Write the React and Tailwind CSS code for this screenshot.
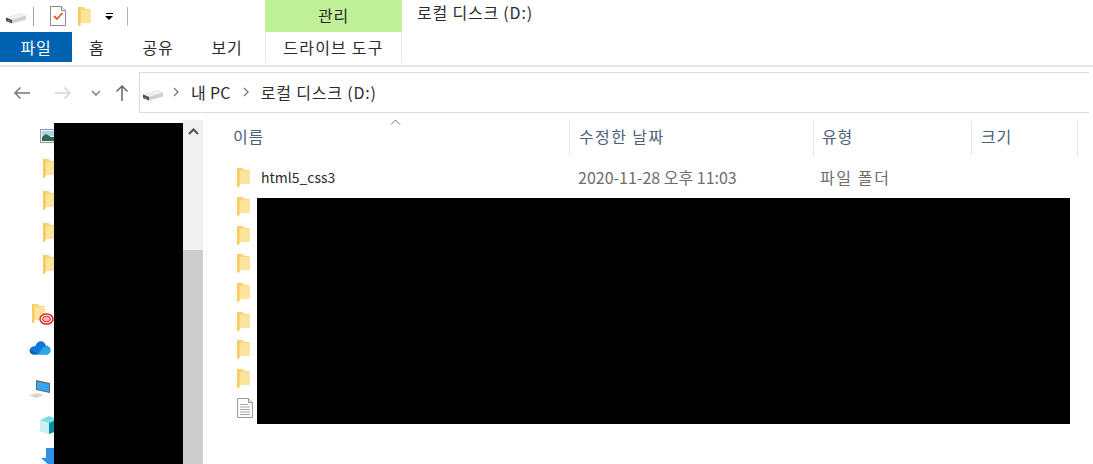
import React from "react";

const FONT = "font-['Noto_Sans_CJK_KR','Noto_Sans',sans-serif]";

const Folder = ({ className = "" }) => (
  <svg width="13" height="19" viewBox="1 0 13 19" className={className}>
    <path d="M1 0h6l1.500 2H13.500v14H3.500v2L1 19z" fill="#fbd577" />
    <path d="M3.500 3H13.500v13H3.500z" fill="#fee39a" />
    <path d="M1 0h2.500v18L1 19z" fill="#f5cb63" />
  </svg>
);

const Drive = ({ className = "" }) => (
  <svg width="20" height="12" viewBox="0 0 20 12" className={className}>
    <path d="M0 5.500 14 1l6 2.500v4L6 11.500 0 9z" fill="#cfcfcf" />
    <path d="M0 5.500 6 8l14-4.500L14 1z" fill="#f0f0f0" />
    <path d="M0 5.500 6 8v3.500L0 9z" fill="#4d4d4d" />
    <path d="M2 8l2 .8v1L2 9z" fill="#4caf50" />
  </svg>
);

const CheckDoc = () => (
  <svg width="16" height="20" viewBox="0 0 16 20">
    <path d="M.5.500h11l4 4v15H.5z" fill="#fff" stroke="#8a8a8a" />
    <path d="M11.500.500v4h4" fill="#eee" stroke="#8a8a8a" />
    <path d="M4 10l3 3 5.500-6" fill="none" stroke="#e2562a" strokeWidth="1.800" />
  </svg>
);

const TextDoc = () => (
  <svg width="16" height="20" viewBox="0 0 16 20">
    <path d="M.5.500h11l4 4v15H.5z" fill="#fbfbfb" stroke="#9a9a9a" />
    <path d="M11.500.500v4h4" fill="#e6e6e6" stroke="#9a9a9a" />
    <path d="M3 6.500h8M3 9h10M3 11.500h10M3 14h10M3 16.500h10" stroke="#a9a9a9" />
  </svg>
);

const Picture = () => (
  <svg width="16" height="14" viewBox="0 0 16 14">
    <rect x=".5" y=".5" width="15" height="13" fill="#f5f5f5" stroke="#9a9a9a" />
    <rect x="2" y="2" width="12" height="5" fill="#a8d4e8" />
    <path d="M2 8l4-3 5 3h3v4H2z" fill="#2f6b4f" />
  </svg>
);

const AdobeFolder = () => (
  <div className="relative w-[18px] h-[20px]">
    <Folder />
    <svg width="15" height="12" viewBox="0 0 15 12" className="absolute right-[-4px] bottom-[-1px]">
      <ellipse cx="7.500" cy="6" rx="6.500" ry="5" fill="#fff" stroke="#e0201b" strokeWidth="1.500" />
      <ellipse cx="7.500" cy="6" rx="4" ry="2.800" fill="#f7b5b0" stroke="#e0201b" />
    </svg>
  </div>
);

const OneDrive = () => (
  <svg width="22" height="15" viewBox="0 0 22 15">
    <path d="M5 14.500C1 14.500 0 11 1 9c1-2 3-3 5-2.500C7.500 2 11 .500 13.500 1.500 15.500 2.500 16.500 4 17 6c3 0 5 2.500 4.500 5-.4 2.200-2 3.500-4 3.500z" fill="#0f78d4" />
    <path d="M5 14.500C2 14.500 0 12 1 9.500l8 5z" fill="#0a5eb0" />
    <path d="M13.500 8c1.500-1.500 5-2 6.500 0s1.500 5-1 6.500H9z" fill="#29a8ea" />
  </svg>
);

const Computer = () => (
  <svg width="22" height="19" viewBox="0 0 22 19">
    <path d="M7 0l14 3v10L7 10z" fill="#666" />
    <path d="M8 1.500l12 2.500v7.800L8 9.300z" fill="#35a7f2" />
    <path d="M0 15.500l8-2.500 7 2-8 3z" fill="#d4d4d4" />
  </svg>
);

const Cube = () => (
  <svg width="14" height="20" viewBox="0 0 14 20">
    <path d="M0 5l9-4 5 2v14l-5 2-9-3z" fill="#7fdfe4" />
    <path d="M0 5l9 3v11L0 16z" fill="#c8f1f2" />
    <path d="M9 8l5-2v11l-5 2z" fill="#0b8aa6" />
  </svg>
);

const Download = () => (
  <svg width="14" height="17" viewBox="0 0 14 17">
    <path d="M5 0h9v17H8L0 10h5z" fill="#2f8fe6" />
  </svg>
);

const sideRows = [
  { icon: <Picture />, pl: "pl-[40px]" },
  { icon: <Folder />, pl: "pl-[43px]" },
  { icon: <Folder />, pl: "pl-[43px]" },
  { icon: <Folder />, pl: "pl-[43px]" },
  { icon: <Folder />, pl: "pl-[43px]" },
];

const fileIcons = [1, 2, 3, 4, 5, 6, 7, 8];

const columns = [
  { label: "이름", w: "w-[341px]", pl: "pl-[4px]" },
  { label: "수정한 날짜", w: "w-[244px]", pl: "pl-[9px] tracking-[1.400px]" },
  { label: "유형", w: "w-[158px]", pl: "pl-[8px]" },
  { label: "크기", w: "w-[106px]", pl: "pl-[9px]" },
];

export default function App() {
  return (
    <div className={`${FONT} relative w-[1093px] h-[464px] overflow-hidden bg-white text-[16px] tracking-[0.8px] text-[#2b2b2b]`}>
      {/* title bar */}
      <div className="flex h-[32px]">
        <div className="flex items-center w-[265px] pl-[6px]">
          <Drive className="mt-[3px]" />
          <div className="w-px h-[19px] bg-[#a0a0a0] ml-[7px]" />
          <div className="ml-[16px]"><CheckDoc /></div>
          <Folder className="ml-[12px]" />
          <div className="ml-[14px] flex flex-col items-center gap-[2px]">
            <div className="w-[7px] h-px bg-black" />
            <div className="w-0 h-0 border-x-[4px] border-x-transparent border-t-[4px] border-t-black" />
          </div>
          <div className="w-px h-[19px] bg-[#b5b5b5] ml-[14px]" />
        </div>
        <div className="w-[137px] bg-[#c0f199] flex items-center justify-center pb-[3px]">관리</div>
        <div className="pl-[15px] pt-[2px] leading-[20px]">로컬 디스크 (D:)</div>
      </div>

      {/* ribbon tabs */}
      <div className="flex h-[30px]">
        <div className="w-[72px] bg-[#0063b1] text-white flex items-center justify-center">파일</div>
        <div className="w-[193px] flex items-center">
          <span className="ml-[17px]">홈</span>
          <span className="ml-[38px]">공유</span>
          <span className="ml-[38px]">보기</span>
        </div>
        <div className="w-[137px] flex items-center justify-center border-x border-[#e6e6e6] tracking-[1.200px]">드라이브 도구</div>
      </div>

      <div className="mt-[3px] h-[2px] bg-[#e6e6e6]" />

      {/* address row */}
      <div className="flex items-center h-[46px] pt-[5px]">
        <div className="flex items-center w-[139px] pl-[13px] text-[#6d6d6d]">
          <svg width="18" height="14" viewBox="0 0 18 14" fill="none" stroke="#777" strokeWidth="1.500">
            <path d="M17 7H2M7.500 1.500 2 7l5.500 5.500" />
          </svg>
          <svg width="18" height="14" viewBox="0 0 18 14" fill="none" stroke="#d4d4d4" strokeWidth="1.500" className="ml-[23px]">
            <path d="M1 7h15M10.500 1.500 16 7l-5.500 5.500" />
          </svg>
          <svg width="10" height="6" viewBox="0 0 10 6" fill="none" stroke="#777" strokeWidth="1.400" className="ml-[19px]">
            <path d="M1 1l4 4 4-4" />
          </svg>
          <svg width="14" height="17" viewBox="0 0 14 17" fill="none" stroke="#666" strokeWidth="1.500" className="ml-[14px]">
            <path d="M7 17V2M1.500 7.500 7 2l5.500 5.500" />
          </svg>
        </div>
        <div className="flex items-center w-[950px] h-[41px] border-y border-l border-[#dcdcdc] pl-[3px] pb-[2px]">
          <Drive className="mt-[6px]" />
          <svg width="6" height="10" viewBox="0 0 6 10" fill="none" stroke="#777" strokeWidth="1.300" className="ml-[10px]">
            <path d="M1 1l4 4-4 4" />
          </svg>
          <span className="ml-[12px] tracking-[0.3px]">내 PC</span>
          <svg width="6" height="10" viewBox="0 0 6 10" fill="none" stroke="#777" strokeWidth="1.300" className="ml-[12px]">
            <path d="M1 1l4 4-4 4" />
          </svg>
          <span className="ml-[12px]">로컬 디스크 (D:)</span>
        </div>
      </div>

      {/* body */}
      <div className="flex h-[351px]">
        <div className="relative w-[203px] shrink-0 pt-[7px]">
          <div className="w-[183px]">
            {sideRows.map((row, i) => (
              <div key={i} className={`${row.pl} h-[32px] flex items-center`}>{row.icon}</div>
            ))}
            <div className="h-[46px] flex items-end pl-[32px] pb-[2px]"><AdobeFolder /></div>
            <div className="h-[39px] flex items-center pl-[29px] pt-[4px]"><OneDrive /></div>
            <div className="h-[43px] flex items-center pl-[29px] pt-[6px]"><Computer /></div>
            <div className="h-[32px] flex items-center pl-[40px] pt-[2px]"><Cube /></div>
            <div className="h-[32px] flex items-center pl-[41px]"><Download /></div>
          </div>
          <div className="absolute left-[183px] top-[7px] bottom-0 w-[20px] bg-[#f0f0f0] flex flex-col">
            <div className="h-[130px] flex justify-center pt-[8px]">
              <svg width="11" height="7" viewBox="0 0 11 7" fill="none" stroke="#505050" strokeWidth="2">
                <path d="M1 6l4.500-4.500L10 6" />
              </svg>
            </div>
            <div className="flex-1 bg-[#cdcdcd]" />
          </div>
          <div className="absolute left-[54px] top-[10px] bottom-0 w-[129px] bg-black" />
        </div>

        <div className="ml-[3px] w-px bg-[#f5f5f5] shrink-0" />

        <div className="relative flex-1 pl-[22px]">
          <div className="relative flex h-[34px] mt-[8px] text-[#4c607a]">
            {columns.map((c) => (
              <div key={c.label} className={`${c.w} ${c.pl} flex items-center border-r border-[#e5e5e5] pb-[4px]`}>
                {c.label}
              </div>
            ))}
            <svg width="11" height="6" viewBox="0 0 11 6" fill="none" stroke="#777" className="absolute left-[161px] top-[-2px]">
              <path d="M1 5.500 5.500 1 10 5.500" />
            </svg>
          </div>

          <div className="pl-[8px] mt-[8px]">
            <div className="flex items-center h-[29px]">
              <Folder />
              <span className="w-[317px] ml-[11px] text-[14px] tracking-normal">html5_css3</span>
              <span className="w-[242px] text-[#6d6d6d] tracking-normal pb-[2px]">2020-11-28 오후 11:03</span>
              <span className="text-[#6d6d6d] tracking-[1.600px] pb-[2px]">파일 폴더</span>
            </div>
            {fileIcons.slice(1).map((n) => (
              <div key={n} className="flex items-center h-[28.700px]"><Folder /></div>
            ))}
            <div className="flex items-center h-[29px] pt-[2px]"><TextDoc /></div>
          </div>

          <div className="absolute left-[50px] top-[85px] w-[813px] h-[226px] bg-black" />
        </div>
      </div>
    </div>
  );
}
